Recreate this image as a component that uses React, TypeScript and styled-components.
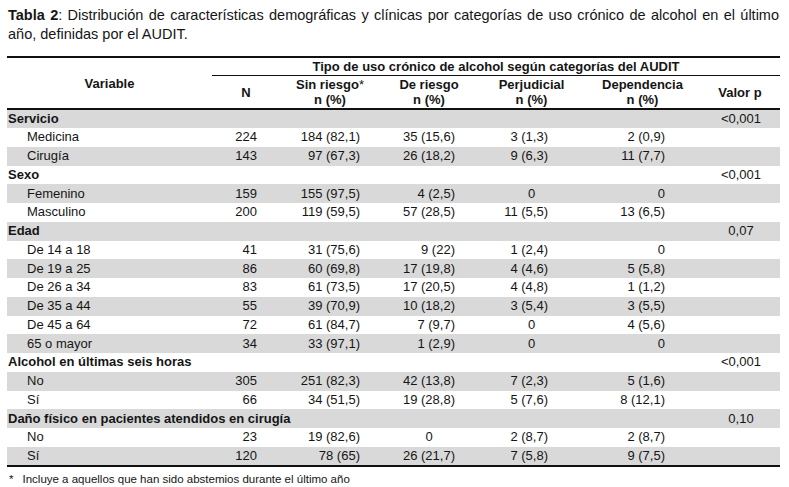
import React from "react";
import styled, { createGlobalStyle } from "styled-components";

const Global = createGlobalStyle`
  html, body { margin: 0; padding: 0; background: #ffffff; }
  body { font-family: "Liberation Sans", Arial, sans-serif; color: #151515; }
`;

const Page = styled.div`
  width: 789px;
  padding: 6px 9px 0 7px;
  box-sizing: border-box;
`;

const Caption = styled.p`
  margin: 0 1px 12px 1px;
  font-size: 14.5px;
  line-height: 19px;
  text-align: justify;
`;

const Strong = styled.b`
  font-weight: 700;
`;

const Table = styled.table`
  width: 773px;
  border-collapse: collapse;
  table-layout: fixed;
  font-size: 13px;
  border-top: 2px solid #111;
  border-bottom: 2px solid #111;
`;

const HeadCell = styled.th<{ $rule?: "thin" | "thick" }>`
  font-weight: 700;
  text-align: center;
  vertical-align: middle;
  padding: 0;
  line-height: 15px;
  height: ${(p) => (p.$rule === "thin" ? "17px" : "32px")};
  border-bottom: ${(p) => (p.$rule === "thin" ? "1px solid #111" : "2px solid #111")};
`;

const Star = styled.span`
  font-weight: 400;
`;

const Row = styled.tr<{ $shaded: boolean }>`
  height: 18.75px;
  background: ${(p) => (p.$shaded ? "#d9d9d9" : "#ffffff")};
`;

const GroupLabel = styled.td`
  font-weight: 700;
  padding: 0 0 0 1px;
  line-height: 18px;
  white-space: nowrap;
`;

const ItemLabel = styled.td`
  padding: 0 0 0 20px;
  line-height: 18px;
`;

const Cell = styled.td<{ $align: "right" | "center"; $pr: number }>`
  text-align: ${(p) => p.$align};
  padding: 0 ${(p) => (p.$align === "right" ? p.$pr : 0)}px 0 0;
  line-height: 18px;
  white-space: nowrap;
`;

const PCell = styled.td`
  text-align: center;
  padding: 0 0 0 2px;
  line-height: 18px;
`;

const Footnote = styled.div`
  display: flex;
  gap: 9px;
  margin: 5px 0 0 2px;
  font-size: 11.5px;
  line-height: 14px;
`;

const widths = [205, 68, 100, 98, 107, 115, 80];
const padRight = [23, 20, 23, 37, 35];

type Item = { label: string; values: string[] };
type Group = { title: string; p: string; items: Item[] };

const groups: Group[] = [
  {
    title: "Servicio",
    p: "<0,001",
    items: [
      { label: "Medicina", values: ["224", "184 (82,1)", "35 (15,6)", "3 (1,3)", "2 (0,9)"] },
      { label: "Cirugía", values: ["143", "97 (67,3)", "26 (18,2)", "9 (6,3)", "11 (7,7)"] },
    ],
  },
  {
    title: "Sexo",
    p: "<0,001",
    items: [
      { label: "Femenino", values: ["159", "155 (97,5)", "4 (2,5)", "0", "0"] },
      { label: "Masculino", values: ["200", "119 (59,5)", "57 (28,5)", "11 (5,5)", "13 (6,5)"] },
    ],
  },
  {
    title: "Edad",
    p: "0,07",
    items: [
      { label: "De 14 a 18", values: ["41", "31 (75,6)", "9 (22)", "1 (2,4)", "0"] },
      { label: "De 19 a 25", values: ["86", "60 (69,8)", "17 (19,8)", "4 (4,6)", "5 (5,8)"] },
      { label: "De 26 a 34", values: ["83", "61 (73,5)", "17 (20,5)", "4 (4,8)", "1 (1,2)"] },
      { label: "De 35 a 44", values: ["55", "39 (70,9)", "10 (18,2)", "3 (5,4)", "3 (5,5)"] },
      { label: "De 45 a 64", values: ["72", "61 (84,7)", "7 (9,7)", "0", "4 (5,6)"] },
      { label: "65 o mayor", values: ["34", "33 (97,1)", "1 (2,9)", "0", "0"] },
    ],
  },
  {
    title: "Alcohol en últimas seis horas",
    p: "<0,001",
    items: [
      { label: "No", values: ["305", "251 (82,3)", "42 (13,8)", "7 (2,3)", "5 (1,6)"] },
      { label: "Sí", values: ["66", "34 (51,5)", "19 (28,8)", "5 (7,6)", "8 (12,1)"] },
    ],
  },
  {
    title: "Daño físico en pacientes atendidos en cirugía",
    p: "0,10",
    items: [
      { label: "No", values: ["23", "19 (82,6)", "0", "2 (8,7)", "2 (8,7)"] },
      { label: "Sí", values: ["120", "78 (65)", "26 (21,7)", "7 (5,8)", "9 (7,5)"] },
    ],
  },
];

const alignFor = (col: number, v: string): "right" | "center" =>
  v === "0" && (col === 2 || col === 3) ? "center" : "right";

export default function App() {
  let rowIndex = 0;
  const rows: React.ReactNode[] = [];
  groups.forEach((g) => {
    rows.push(
      <Row key={g.title} $shaded={rowIndex++ % 2 === 0}>
        <GroupLabel colSpan={6}>{g.title}</GroupLabel>
        <PCell>{g.p}</PCell>
      </Row>
    );
    g.items.forEach((it) => {
      rows.push(
        <Row key={g.title + it.label} $shaded={rowIndex++ % 2 === 0}>
          <ItemLabel>{it.label}</ItemLabel>
          {it.values.map((v, i) => (
            <Cell key={i} $align={alignFor(i, v)} $pr={padRight[i]}>
              {v}
            </Cell>
          ))}
          <td />
        </Row>
      );
    });
  });

  return (
    <>
      <Global />
      <Page>
        <Caption>
          <Strong>Tabla 2</Strong>: Distribución de características demográficas y clínicas por categorías de uso
          crónico de alcohol en el último año, definidas por el AUDIT.
        </Caption>
        <Table>
          <colgroup>
            {widths.map((w, i) => (
              <col key={i} style={{ width: w }} />
            ))}
          </colgroup>
          <thead>
            <tr>
              <HeadCell rowSpan={2}>Variable</HeadCell>
              <HeadCell colSpan={6} $rule="thin">
                Tipo de uso crónico de alcohol según categorías del AUDIT
              </HeadCell>
            </tr>
            <tr>
              <HeadCell>N</HeadCell>
              <HeadCell>
                Sin riesgo<Star>*</Star>
                <br />n (%)
              </HeadCell>
              <HeadCell>
                De riesgo
                <br />n (%)
              </HeadCell>
              <HeadCell>
                Perjudicial
                <br />n (%)
              </HeadCell>
              <HeadCell>
                Dependencia
                <br />n (%)
              </HeadCell>
              <HeadCell>Valor p</HeadCell>
            </tr>
          </thead>
          <tbody>{rows}</tbody>
        </Table>
        <Footnote>
          <span>*</span>
          <span>Incluye a aquellos que han sido abstemios durante el último año</span>
        </Footnote>
      </Page>
    </>
  );
}
